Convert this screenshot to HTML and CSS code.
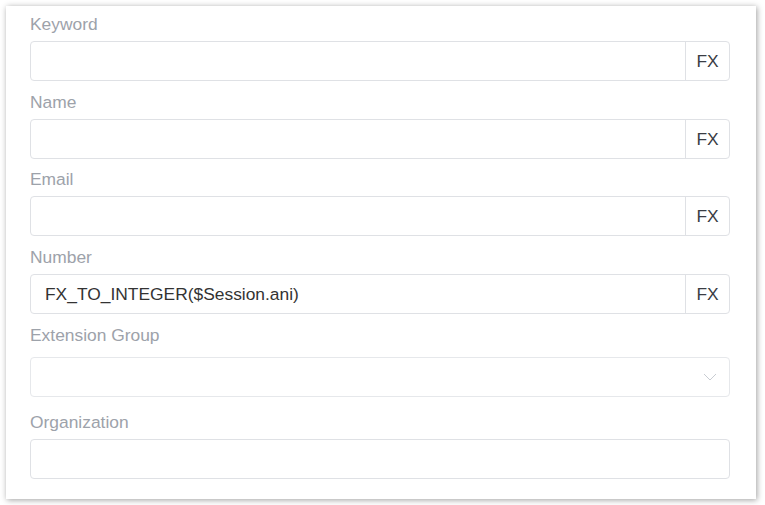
FILE: index.html
```html
<!DOCTYPE html>
<html>
<head>
<meta charset="utf-8">
<link rel="stylesheet" href="styles.css">
</head>
<body>
<div class="card">
  <div class="item">
    <label class="label">Keyword</label>
    <div class="group"><div class="field"></div><div class="addon">FX</div></div>
  </div>
  <div class="item">
    <label class="label">Name</label>
    <div class="group"><div class="field"></div><div class="addon">FX</div></div>
  </div>
  <div class="item">
    <label class="label">Email</label>
    <div class="group"><div class="field"></div><div class="addon">FX</div></div>
  </div>
  <div class="item">
    <label class="label">Number</label>
    <div class="group"><div class="field">FX_TO_INTEGER($Session.ani)</div><div class="addon">FX</div></div>
  </div>
  <div class="item item-select">
    <label class="label">Extension Group</label>
    <div class="select">
      <svg class="chev" width="14" height="8" viewBox="0 0 14 8"><path d="M1 1 L7 7 L13 1" fill="none" stroke="#c8ccd2" stroke-width="1"/></svg>
    </div>
  </div>
  <div class="item item-last">
    <label class="label">Organization</label>
    <div class="single"></div>
  </div>
</div>
</body>
</html>
```

FILE: styles.css
```css
html, body {
  margin: 0;
  padding: 0;
  background: #ffffff;
}
body {
  padding: 6px 9px 6px 6px;
  font-family: "Liberation Sans", Arial, sans-serif;
}
.card {
  width: 750px;
  box-sizing: border-box;
  background: #fff;
  box-shadow: 1px 1px 6px rgba(0, 0, 0, 0.38);
  padding: 7px 26px 20px 24px;
  display: flex;
  flex-direction: column;
}
.item {
  display: flex;
  flex-direction: column;
  margin-bottom: 9.67px;
}
.label {
  font-size: 17.4px;
  line-height: 22px;
  color: #9da2aa;
  margin-bottom: 6px;
}
.group {
  display: flex;
  height: 40px;
  box-sizing: border-box;
  border: 1px solid #dfe1e5;
  border-radius: 4px;
}
.field {
  flex: 1;
  padding-left: 14px;
  font-size: 17.4px;
  line-height: 38px;
  color: #333;
}
.addon {
  width: 43px;
  border-left: 1px solid #dfe1e5;
  text-align: center;
  font-size: 17.4px;
  line-height: 38px;
  color: #3a3d44;
}
.item-select {
  margin-bottom: 14px;
}
.item-select .label {
  margin-bottom: 11px;
}
.select {
  height: 40px;
  box-sizing: border-box;
  border: 1px solid #e6e8eb;
  border-radius: 4px;
  display: flex;
  align-items: center;
  justify-content: flex-end;
  padding-right: 12px;
}
.item-last {
  margin-bottom: 0;
}
.item-last .label {
  margin-bottom: 6px;
}
.single {
  height: 40px;
  box-sizing: border-box;
  border: 1px solid #dfe1e5;
  border-radius: 4px;
}
```
